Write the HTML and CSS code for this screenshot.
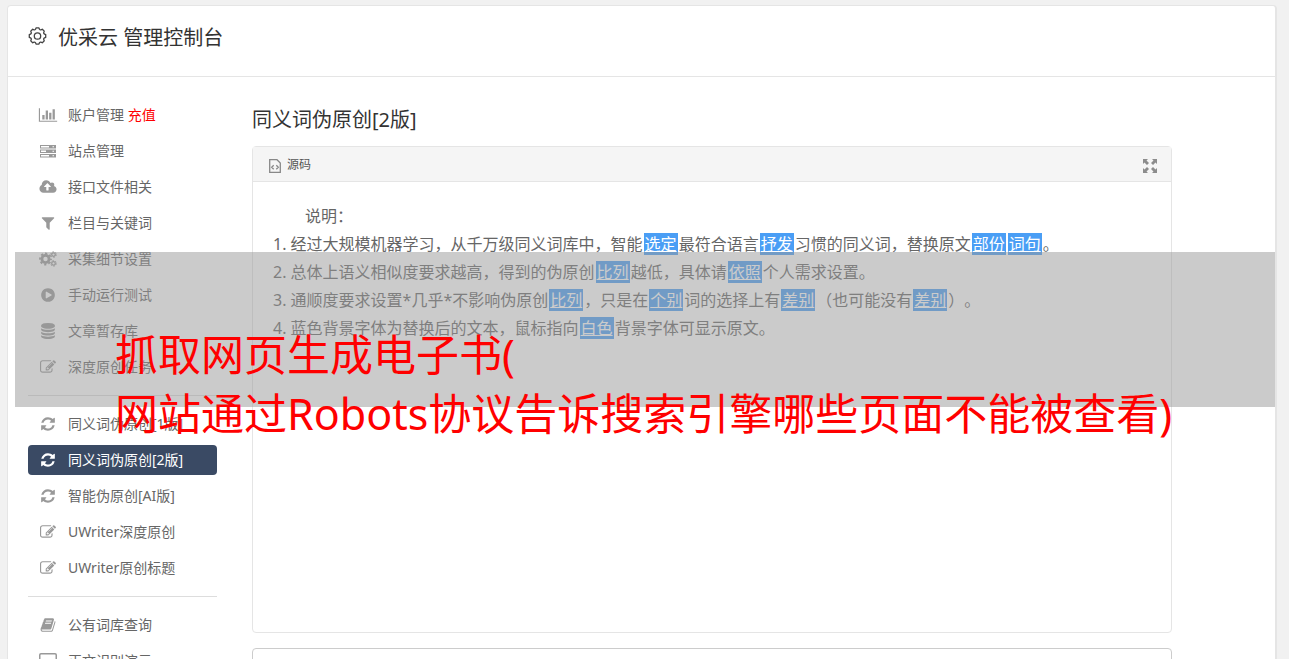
FILE: index.html
```
<!DOCTYPE html>
<html lang="zh-CN">
<head>
  <meta charset="UTF-8" />
  <meta name="viewport" content="width=device-width, initial-scale=1.0" />
  <title>优采云 管理控制台</title>
  <link rel="stylesheet" href="styles.css">
</head>
<body>
  <svg class="sprite" aria-hidden="true">
    <symbol id="i-chart" viewBox="0 0 2048 1792"><path d="M640 896v512h-256v-512h256zm384-512v1024h-256v-1024h256zm1024 1152v128h-2048v-1536h128v1408h1920zm-640-896v768h-256v-768h256zm384-384v1152h-256v-1152h256z"/></symbol>
    <symbol id="i-server" viewBox="-1 -1 18 16"><path fill-rule="evenodd" d="M0 1h16v3.500H0zM1 2v1.500h8V2zM12.500 2.200v1.100h1.500V2.200zM0 5.500h16V9H0zM1 6.500V8h5V6.500zM12.500 6.700v1.100h1.500V6.700zM0 10h16v3.500H0zM1 11v1.500h8V11zM12.500 11.200v1.100h1.500v-1.100z"/></symbol>
    <symbol id="i-cloud" viewBox="0 0 1920 1792"><path d="M1280 864q0-14-9-23l-352-352q-9-9-23-9t-23 9l-351 351q-10 12-10 24 0 14 9 23t23 9h224v352q0 13 9.500 22.500t22.500 9.500h192q13 0 22.500-9.500t9.500-22.500v-352h224q13 0 22.500-9.500t9.500-22.500zm640 288q0 159-112.500 271.500t-271.500 112.500h-1088q-185 0-316.500-131.500t-131.500-316.500q0-130 70-240t188-165q-2-30-2-43 0-212 150-362t362-150q156 0 285.500 87t188.500 231q71-62 166-62 106 0 181 75t75 181q0 76-41 138 130 31 213.500 135.500t83.500 238.500z"/></symbol>
    <symbol id="i-filter" viewBox="0 0 1792 1792"><path d="M1595 295q17 41-14 70l-493 493v742q0 42-39 59-13 5-25 5-27 0-45-19l-256-256q-19-19-19-45v-486l-493-493q-31-29-14-70 17-39 59-39h1280q42 0 59 39z"/></symbol>
    <symbol id="i-cogs" viewBox="0 0 18 16">
      <g fill="none" stroke="currentColor">
        <circle cx="6.500" cy="8" r="3.600" stroke-width="2.800"/>
        <circle cx="6.500" cy="8" r="5.500" stroke-width="1.800" stroke-dasharray="2.200 2.120" stroke-dashoffset="1.100"/>
        <circle cx="14.500" cy="3.600" r="1.800" stroke-width="1.300"/>
        <circle cx="14.500" cy="3.600" r="2.800" stroke-width="1" stroke-dasharray="1.500 1.430"/>
        <circle cx="14.500" cy="12.400" r="1.800" stroke-width="1.300"/>
        <circle cx="14.500" cy="12.400" r="2.800" stroke-width="1" stroke-dasharray="1.500 1.430"/>
      </g>
    </symbol>
    <symbol id="i-play" viewBox="0 0 1792 1792"><path d="M896 128q209 0 385.500 103t279.500 279.500 103 385.500-103 385.500-279.500 279.500-385.500 103-385.500-103-279.500-279.500-103-385.500 103-385.500 279.500-279.500 385.500-103zm384 823q32-18 32-55t-32-55l-544-320q-31-19-64-1-32 19-32 56v640q0 37 32 56 16 8 32 8 17 0 32-9z"/></symbol>
    <symbol id="i-database" viewBox="0 0 1792 1792"><path d="M896 768q237 0 443-43t325-127v170q0 69-103 128t-280 93.500-385 34.500-385-34.500-280-93.500-103-128v-170q119 84 325 127t443 43zm0 768q237 0 443-43t325-127v170q0 69-103 128t-280 93.500-385 34.500-385-34.500-280-93.500-103-128v-170q119 84 325 127t443 43zm0-384q237 0 443-43t325-127v170q0 69-103 128t-280 93.500-385 34.500-385-34.500-280-93.500-103-128v-170q119 84 325 127t443 43zm0-1152q208 0 385 34.500t280 93.500 103 128v128q0 69-103 128t-280 93.500-385 34.500-385-34.500-280-93.500-103-128v-128q0-69 103-128t280-93.500 385-34.500z"/></symbol>
    <symbol id="i-edit" viewBox="0 0 1792 1792"><path d="M888 1184l116-116-152-152-116 116v56h96v96h56zm440-720q-16-16-33 1l-350 350q-17 17-1 33t33-1l350-350q17-17 1-33zm80 594v190q0 119-84.500 203.500t-203.500 84.500h-832q-119 0-203.500-84.500t-84.500-203.500v-832q0-119 84.500-203.500t203.500-84.500h832q63 0 117 25 15 7 18 23 3 17-9 29l-49 49q-14 14-32 8-23-6-45-6h-832q-66 0-113 47t-47 113v832q0 66 47 113t113 47h832q66 0 113-47t47-113v-126q0-13 9-22l64-64q15-15 35-7t20 29zm-96-738l288 288-672 672h-288v-288zm444 132l-92 92-288-288 92-92q28-28 68-28t68 28l152 152q28 28 28 68t-28 68z"/></symbol>
    <symbol id="i-refresh" viewBox="0 0 1792 1792"><path d="M1639 1056q0 5-1 7-64 268-268 434.500t-478 166.500q-146 0-282.500-55t-243.500-157l-129 129q-19 19-45 19t-45-19-19-45v-448q0-26 19-45t45-19h448q26 0 45 19t19 45-19 45l-137 137q71 66 161 102t187 36q134 0 250-65t186-179q11-17 53-117 8-23 30-23h192q13 0 22.500 9.500t9.500 22.500zm25-800v448q0 26-19 45t-45 19h-448q-26 0-45-19t-19-45 19-45l138-138q-148-137-349-137-134 0-250 65t-186 179q-11 17-53 117-8 23-30 23h-199q-13 0-22.500-9.500t-9.500-22.500v-7q65-268 270-434.500t480-166.500q146 0 284 55.500t245 156.500l130-129q19-19 45-19t45 19 19 45z"/></symbol>
    <symbol id="i-book" viewBox="0 0 1792 1792"><path d="M1703 478q40 57 18 129l-275 906q-19 64-76.500 107.500t-122.500 43.500h-923q-77 0-148.500-53.500t-99.500-131.500q-24-67-2-127 0-4 3-27t4-37q1-8-3-21.500t-3-19.500q2-11 8-21t16.500-23.500 16.500-23.500q23-38 45-91.500t30-91.500q3-10 .5-30t-.5-28q3-11 17-28t17-23q21-36 42-92t25-90q1-9-2.500-32t.5-28q4-13 22-30.500t22-22.500q19-26 42.500-84.500t27.500-96.500q1-8-3-25.500t-2-26.500q2-8 9-18t18-23 17-21q8-12 16.500-30.500t15-35 16-36 19.500-32 26.500-23.500 36-11.500 47.500 5.500l-1 3q38-9 51-9h761q74 0 114 56t18 130l-274 906q-36 119-71.500 153.500t-128.500 34.500h-869q-27 0-38 15-11 16-1 43 24 70 144 70h923q29 0 56-15.500t35-41.500l300-987q7-22 5-57 38 15 59 43zm-1064 2q-4 13 2 22.500t20 9.500h608q13 0 25.500-9.500t16.500-22.500l21-64q4-13-2-22.500t-20-9.500h-608q-13 0-25.500 9.500t-16.500 22.500zm-83 256q-4 13 2 22.500t20 9.500h608q13 0 25.500-9.500t16.500-22.500l21-64q4-13-2-22.500t-20-9.500h-608q-13 0-25.500 9.500t-16.500 22.500z"/></symbol>
    <symbol id="i-laptop" viewBox="0 0 18 16"><path fill-rule="evenodd" d="M2 0h14q2 0 2 2v9q0 2-2 2h-5v2H7v-2H2q-2 0-2-2V2q0-2 2-2zm0 1.500q-.5 0-.5.500v9q0 .5.500.5h14q.5 0 .5-.5V2q0-.5-.5-.5z"/></symbol>
  </svg>

  <div class="wrapper">
    <header class="header">
      <svg class="gear" viewBox="-9 -9 18 18"><path d="M8.200-1.300V1.300L6.700 2.050Q6 2.600 6.180 3.290L6.710 4.880 4.880 6.710 3.290 6.180Q2.600 6 2.050 6.700L1.300 8.200H-1.300L-2.050 6.700Q-2.600 6-3.290 6.180L-4.880 6.710-6.710 4.880-6.180 3.290Q-6 2.600-6.700 2.050L-8.200 1.300V-1.300L-6.700-2.050Q-6-2.600-6.180-3.290L-6.710-4.880-4.880-6.710-3.290-6.180Q-2.600-6-2.050-6.700L-1.300-8.200H1.300L2.050-6.700Q2.600-6 3.290-6.180L4.880-6.710 6.710-4.880 6.180-3.290Q6-2.600 6.700-2.050Z"/><circle r="3.200"/></svg>
      <h1>优采云 管理控制台</h1>
    </header>

    <div class="main">
      <nav class="sidebar">
        <a href="#"><svg><use href="#i-chart"/></svg><span>账户管理 <em>充值</em></span></a>
        <a href="#"><svg><use href="#i-server"/></svg>站点管理</a>
        <a href="#"><svg><use href="#i-cloud"/></svg>接口文件相关</a>
        <a href="#"><svg><use href="#i-filter"/></svg>栏目与关键词</a>
        <a href="#"><svg><use href="#i-cogs"/></svg>采集细节设置</a>
        <a href="#"><svg><use href="#i-play"/></svg>手动运行测试</a>
        <a href="#"><svg><use href="#i-database"/></svg>文章暂存库</a>
        <a href="#"><svg><use href="#i-edit"/></svg>深度原创任务</a>
        <hr>
        <a href="#"><svg><use href="#i-refresh"/></svg>同义词伪原创[1版]</a>
        <a href="#" class="active"><svg><use href="#i-refresh"/></svg>同义词伪原创[2版]</a>
        <a href="#"><svg><use href="#i-refresh"/></svg>智能伪原创[AI版]</a>
        <a href="#"><svg><use href="#i-edit"/></svg>UWriter深度原创</a>
        <a href="#"><svg><use href="#i-edit"/></svg>UWriter原创标题</a>
        <hr>
        <a href="#"><svg><use href="#i-book"/></svg>公有词库查询</a>
        <a href="#"><svg><use href="#i-laptop"/></svg>正文识别演示</a>
      </nav>

      <section class="content">
        <h2>同义词伪原创[2版]</h2>
        <div class="editor">
          <div class="toolbar">
            <button type="button">
              <svg class="source-icon" viewBox="0 0 12 14"><path d="M.7.700h7.300l3.300 3.300v9.300H.7zM4.700 6.200 2.700 8.200l2 2M7.300 6.200l2 2-2 2"/></svg>
              源码
            </button>
            <button type="button" aria-label="全屏">
              <svg class="full-icon" viewBox="0 0 14 14"><path d="M0 0h5L3.500 1.500 6 4 4 6 1.500 3.500 0 5zM14 0v5l-1.500-1.500L10 6 8 4l2.500-2.500L9 0zM0 14V9l1.500 1.500L4 8l2 2-2.500 2.500L5 14zM14 14H9l1.500-1.500L8 10l2-2 2.500 2.500L14 9z"/></svg>
            </button>
          </div>
          <div class="editor-body">
            <p class="indent">说明：</p>
            <p>1. 经过大规模机器学习，从千万级同义词库中，智能<mark>选定</mark>最符合语言<mark>抒发</mark>习惯的同义词，替换原文<mark>部份</mark><mark>词句</mark>。</p>
            <p>2. 总体上语义相似度要求越高，得到的伪原创<mark>比列</mark>越低，具体请<mark>依照</mark>个人需求设置。</p>
            <p>3. 通顺度要求设置*几乎*不影响伪原创<mark>比列</mark>，只是在<mark>个别</mark>词的选择上有<mark>差别</mark>（也可能没有<mark>差别</mark>）。</p>
            <p>4. 蓝色背景字体为替换后的文本，鼠标指向<mark>白色</mark>背景字体可显示原文。</p>
          </div>
        </div>
        <textarea class="source" aria-label="原文"></textarea>
      </section>
    </div>
  </div>

  <div class="banner">抓取网页生成电子书(<br>网站通过Robots协议告诉搜索引擎哪些页面不能被查看)</div>
</body>
</html>
```
FILE: styles.css
```
* { box-sizing: border-box; }

body {
  position: relative;
  margin: 0;
  padding: 5px 12px 0 7px;
  height: 100vh;
  overflow: hidden;
  background: #f1f1f1;
  color: #666;
  font-family: "Noto Sans", "Noto Sans CJK SC", sans-serif;
  font-size: 14px;
  text-spacing-trim: space-all;
}

h1, h2, p { margin: 0; font-weight: normal; }

.sprite { display: none; }

.wrapper {
  background: #fff;
  border: 1px solid #e5e5e5;
  border-right-width: 2px;
  border-radius: 4px;
}

.header {
  display: flex;
  gap: 11px;
  height: 71px;
  padding: 17px 20px;
  border-bottom: 1px solid #e5e5e5;
}

.header h1 {
  color: #333;
  font-size: 20px;
  line-height: 30px;
}

.gear {
  width: 19px;
  height: 18px;
  margin-top: 4px;
  fill: none;
  stroke: #444;
  stroke-width: 1.3;
}

.main {
  display: flex;
  gap: 35px;
  padding: 23px 20px;
}

.sidebar { flex: 0 0 189px; }

.sidebar a {
  display: flex;
  align-items: center;
  gap: 10px;
  height: 30px;
  margin-bottom: 6px;
  padding: 0 10px;
  border-radius: 4px;
  color: #666;
  line-height: 30px;
  text-decoration: none;
  white-space: nowrap;
}

.sidebar svg {
  width: 20px;
  height: 16px;
  color: #999;
  fill: currentColor;
}

.sidebar em {
  color: #f00;
  font-style: normal;
}

.sidebar .active {
  background: #3a4a64;
  color: #fff;
}

.sidebar .active svg { color: #fff; }

.sidebar hr {
  height: 1px;
  margin: 13px 0;
  border: 0;
  background: #ddd;
}

.content {
  flex: 1;
  max-width: 920px;
}

.content h2 {
  margin-bottom: 6px;
  color: #333;
  font-size: 20px;
  line-height: 40px;
}

.editor {
  border: 1px solid #e5e5e5;
  border-radius: 4px;
}

.toolbar {
  display: flex;
  justify-content: space-between;
  align-items: center;
  height: 35px;
  padding: 0 14px 0 15px;
  background: #f5f5f5;
  border-bottom: 1px solid #e5e5e5;
}

.toolbar button {
  display: flex;
  align-items: center;
  gap: 6px;
  padding: 0;
  border: 0;
  background: none;
  color: #555;
  font-family: inherit;
  font-size: 12px;
}

.source-icon {
  width: 12px;
  height: 14px;
  margin: 3px 0 0 1px;
  fill: none;
  stroke: #888;
  stroke-width: 1.3;
}

.full-icon {
  width: 14px;
  height: 14px;
  margin-top: 4px;
  fill: #8c8c8c;
}

.editor-body {
  min-height: 450px;
  padding: 20px;
  font-size: 16px;
  line-height: 28px;
}

.indent { text-indent: 2em; }

mark {
  margin: 0 1px;
  padding: 0 1px;
  background: #4a9ef5;
  color: #fff;
  text-decoration: underline;
}

.source {
  display: block;
  width: 100%;
  height: 120px;
  margin-top: 15px;
  border: 1px solid #ccc;
  border-radius: 4px;
  resize: none;
}

/* title strip laid over the page */
.banner {
  position: absolute;
  top: 252px;
  left: 15px;
  right: 14px;
  height: 155px;
  padding: 73px 0 0 100px;
  background: rgba(151, 151, 151, 0.5);
  color: #f00;
  font-size: 43px;
  line-height: 59px;
  white-space: nowrap;
}
```
